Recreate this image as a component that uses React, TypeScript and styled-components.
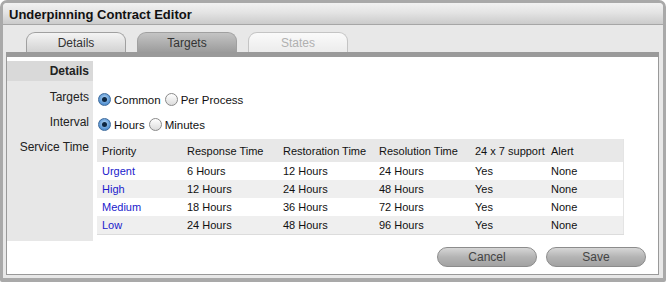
import React, { useState } from 'react';
import styled, { createGlobalStyle } from 'styled-components';

const GlobalStyle = createGlobalStyle`
  html, body {
    margin: 0;
    padding: 0;
    background: #ffffff;
  }
  body {
    font-family: 'Liberation Sans', Arial, sans-serif;
    font-size: 11px;
    color: #000;
  }
`;

const Window = styled.div`
  width: 666px;
  height: 282px;
  box-sizing: border-box;
  border: 3px solid #a9a9a9;
  border-bottom-width: 4px;
  border-radius: 7px 7px 2px 2px;
  background: #e8e8e8;
  display: flex;
  flex-direction: column;
  overflow: hidden;
`;

const TitleBar = styled.div`
  height: 22px;
  flex: none;
  background: linear-gradient(#f2f2f2, #e4e4e4 45%, #cbcbcb);
  border-bottom: 1px solid #a6a6a6;
  display: flex;
  align-items: center;
  padding: 1px 0 0 6px;
  box-sizing: border-box;
  font-size: 13px;
  font-weight: bold;
  color: #111;
`;

const TabStrip = styled.div`
  height: 27px;
  flex: none;
  display: flex;
  align-items: flex-end;
  gap: 11px;
  padding-left: 23px;
`;

const Tab = styled.div<{ $kind: 'normal' | 'active' | 'disabled' }>`
  width: 100px;
  height: 20px;
  box-sizing: border-box;
  border: 1px solid ${p => (p.$kind === 'disabled' ? '#c4c4c4' : '#a0a0a0')};
  border-bottom: none;
  border-radius: 9px 9px 0 0;
  display: flex;
  align-items: center;
  justify-content: center;
  font-size: 12px;
  color: ${p => (p.$kind === 'disabled' ? '#b0b0b0' : '#333')};
  background: ${p =>
    p.$kind === 'active'
      ? 'linear-gradient(#c4c4c4, #9c9c9c)'
      : p.$kind === 'disabled'
      ? 'linear-gradient(#fafafa, #ececec)'
      : 'linear-gradient(#f4f4f4, #d2d2d2)'};
`;

const Panel = styled.div`
  margin: 0 4px 3px 3px;
  flex: 1;
  border: 1px solid #999;
  border-top: 5px solid #9a9a9a;
  background: #fff;
  display: flex;
  flex-direction: column;
`;

const FormGrid = styled.div`
  display: grid;
  grid-template-columns: 86px 1fr;
  align-items: start;
`;

const Label = styled.div<{ $header?: boolean }>`
  background: ${p => (p.$header ? '#d9d9d9' : '#e7e7e7')};
  text-align: right;
  padding-right: 4px;
  font-weight: ${p => (p.$header ? 'bold' : 'normal')};
  font-size: 12px;
  color: #222;
  height: ${p => (p.$header ? '20px' : 'auto')};
  line-height: ${p => (p.$header ? '20px' : 'normal')};
  align-self: stretch;
`;

const LabelCell = styled(Label)`
  padding-top: 3px;
  box-sizing: border-box;
`;

const Spacer = styled.div<{ $h: number }>`
  height: ${p => p.$h}px;
`;

const Field = styled.div`
  display: flex;
  align-items: center;
  padding-left: 5px;
  height: 25px;
  font-size: 11.5px;
  color: #111;
`;

const RadioLabel = styled.label`
  display: flex;
  align-items: center;
  margin-right: 4px;
  cursor: pointer;
`;

const RadioDot = styled.span<{ $on: boolean }>`
  width: 13px;
  height: 13px;
  box-sizing: border-box;
  border-radius: 50%;
  margin-right: 3px;
  border: 1px solid ${p => (p.$on ? '#3d6a9c' : '#8a8a8a')};
  background: ${p =>
    p.$on
      ? 'radial-gradient(circle at 50% 40%, #b9d8f5, #5f9ad6 60%, #3a78bf)'
      : 'linear-gradient(#ffffff, #dcdcdc)'};
  display: flex;
  align-items: center;
  justify-content: center;
  &::after {
    content: '';
    width: 5px;
    height: 5px;
    border-radius: 50%;
    background: #0d2742;
    display: ${p => (p.$on ? 'block' : 'none')};
  }
`;

const TableWrap = styled.div`
  padding: 2px 0 6px 4px;
  width: 527px;
`;

const Table = styled.table`
  width: 100%;
  border-collapse: collapse;
  border-bottom: 1px solid #dcdcdc;
  border-right: 1px solid #e4e4e4;
  font-size: 11px;
  th,
  td {
    text-align: left;
    padding: 0 0 0 5px;
    white-space: nowrap;
  }
  th {
    font-weight: normal;
    height: 23px;
    background: #e8e8e8;
    color: #111;
    font-size: 11px;
  }
  td {
    height: 18px;
    color: #111;
  }
  tbody tr:nth-child(even) td {
    background: #efefef;
  }
`;

const PriorityLink = styled.a`
  color: #1a1acc;
  text-decoration: none;
`;

const Footer = styled.div`
  display: flex;
  justify-content: flex-end;
  gap: 9px;
  padding: 6px 12px 0 0;
`;

const Button = styled.button`
  width: 100px;
  height: 20px;
  border-radius: 10px;
  border: 1px solid #8c8c8c;
  background: linear-gradient(#d6d6d6, #b4b4b4 50%, #a2a2a2);
  font-family: 'Liberation Sans', Arial, sans-serif;
  font-size: 12px;
  color: #444;
  padding: 0;
  cursor: pointer;
`;

const rows = [
  { p: 'Urgent', resp: '6 Hours', rest: '12 Hours', res: '24 Hours' },
  { p: 'High', resp: '12 Hours', rest: '24 Hours', res: '48 Hours' },
  { p: 'Medium', resp: '18 Hours', rest: '36 Hours', res: '72 Hours' },
  { p: 'Low', resp: '24 Hours', rest: '48 Hours', res: '96 Hours' },
];

const Radio: React.FC<{ on: boolean; label: string; onPick: () => void }> = ({ on, label, onPick }) => (
  <RadioLabel onClick={onPick}>
    <RadioDot $on={on} />
    {label}
  </RadioLabel>
);

const App: React.FC = () => {
  const [targets, setTargets] = useState('common');
  const [interval, setInterval] = useState('hours');

  return (
    <>
      <GlobalStyle />
      <Window>
        <TitleBar>Underpinning Contract Editor</TitleBar>
        <TabStrip>
          <Tab $kind="normal">Details</Tab>
          <Tab $kind="active">Targets</Tab>
          <Tab $kind="disabled">States</Tab>
        </TabStrip>
        <Panel>
          <Spacer $h={4} />
          <FormGrid>
            <Label $header>Details</Label>
            <div />
            <Label />
            <Spacer $h={6} />
            <LabelCell>Targets</LabelCell>
            <Field>
              <Radio on={targets === 'common'} label="Common" onPick={() => setTargets('common')} />
              <Radio on={targets === 'per'} label="Per Process" onPick={() => setTargets('per')} />
            </Field>
            <LabelCell>Interval</LabelCell>
            <Field>
              <Radio on={interval === 'hours'} label="Hours" onPick={() => setInterval('hours')} />
              <Radio on={interval === 'minutes'} label="Minutes" onPick={() => setInterval('minutes')} />
            </Field>
            <LabelCell>Service Time</LabelCell>
            <TableWrap>
              <Table>
                <thead>
                  <tr>
                    <th style={{ width: 80 }}>Priority</th>
                    <th style={{ width: 91 }}>Response Time</th>
                    <th style={{ width: 91 }}>Restoration Time</th>
                    <th style={{ width: 91 }}>Resolution Time</th>
                    <th style={{ width: 71 }}>24 x 7 support</th>
                    <th>Alert</th>
                  </tr>
                </thead>
                <tbody>
                  {rows.map(r => (
                    <tr key={r.p}>
                      <td>
                        <PriorityLink href="#">{r.p}</PriorityLink>
                      </td>
                      <td>{r.resp}</td>
                      <td>{r.rest}</td>
                      <td>{r.res}</td>
                      <td>Yes</td>
                      <td>None</td>
                    </tr>
                  ))}
                </tbody>
              </Table>
            </TableWrap>
          </FormGrid>
          <Footer>
            <Button>Cancel</Button>
            <Button>Save</Button>
          </Footer>
        </Panel>
      </Window>
    </>
  );
};

export default App;
